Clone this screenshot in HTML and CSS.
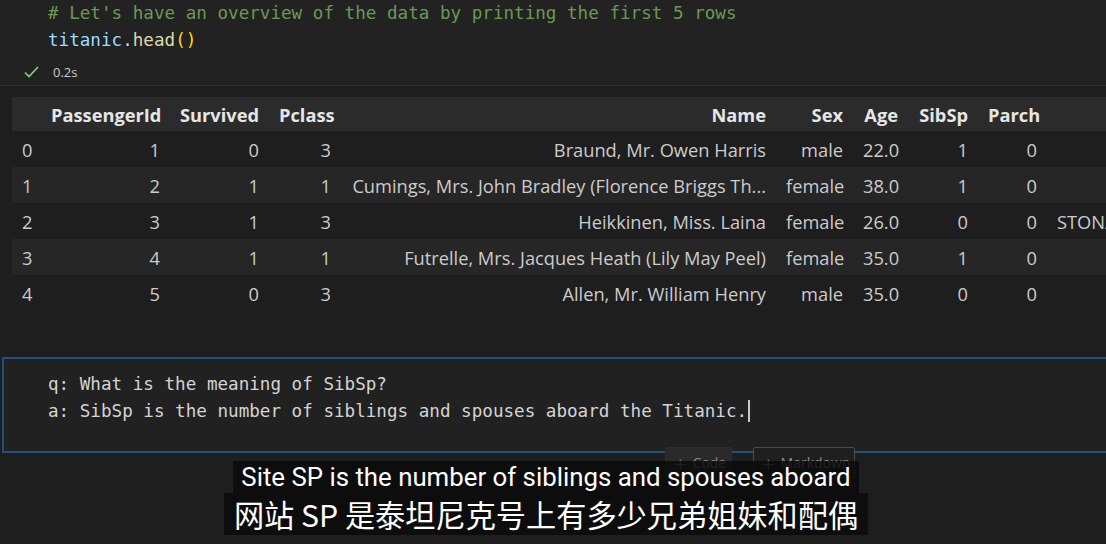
FILE: index.html
```html
<!DOCTYPE html>
<html lang="en">
<head>
<meta charset="utf-8">
<title>titanic.head()</title>
<link rel="stylesheet" href="styles.css">
</head>
<body>
<div class="page">
  <section class="code-cell">
    <div class="code-line"><span class="tok-comment"># Let's have an overview of the data by printing the first 5 rows</span></div>
    <div class="code-line"><span class="tok-var">titanic</span><span class="tok-punc">.</span><span class="tok-fn">head</span><span class="tok-bracket">()</span></div>
    <div class="status">
      <svg class="check" width="15" height="12" viewBox="0 0 15 12"><polyline points="1,6.5 5,10.5 14,1" fill="none" stroke="#89d185" stroke-width="1.6"/></svg>
      <span class="time">0.2s</span>
    </div>
  </section>

  <section class="output">
    <table class="df">
      <colgroup>
        <col class="c-idx"><col class="c-pid"><col class="c-surv"><col class="c-pcl"><col class="c-name"><col class="c-sex"><col class="c-age"><col class="c-sib"><col class="c-par"><col class="c-tic"><col class="c-fare"><col class="c-cab"><col class="c-emb">
      </colgroup>
      <thead>
        <tr><th></th><th>PassengerId</th><th>Survived</th><th>Pclass</th><th>Name</th><th>Sex</th><th>Age</th><th>SibSp</th><th>Parch</th><th>Ticket</th><th>Fare</th><th>Cabin</th><th>Embarked</th></tr>
      </thead>
      <tbody>
        <tr><td class="idx">0</td><td>1</td><td>0</td><td>3</td><td>Braund, Mr. Owen Harris</td><td>male</td><td>22.0</td><td>1</td><td>0</td><td>A/5 21171</td><td>7.2500</td><td>NaN</td><td>S</td></tr>
        <tr><td class="idx">1</td><td>2</td><td>1</td><td>1</td><td>Cumings, Mrs. John Bradley (Florence Briggs Th...</td><td>female</td><td>38.0</td><td>1</td><td>0</td><td>PC 17599</td><td>71.2833</td><td>C85</td><td>C</td></tr>
        <tr><td class="idx">2</td><td>3</td><td>1</td><td>3</td><td>Heikkinen, Miss. Laina</td><td>female</td><td>26.0</td><td>0</td><td>0</td><td>STON/O2. 3101282</td><td>7.9250</td><td>NaN</td><td>S</td></tr>
        <tr><td class="idx">3</td><td>4</td><td>1</td><td>1</td><td>Futrelle, Mrs. Jacques Heath (Lily May Peel)</td><td>female</td><td>35.0</td><td>1</td><td>0</td><td>113803</td><td>53.1000</td><td>C123</td><td>S</td></tr>
        <tr><td class="idx">4</td><td>5</td><td>0</td><td>3</td><td>Allen, Mr. William Henry</td><td>male</td><td>35.0</td><td>0</td><td>0</td><td>373450</td><td>8.0500</td><td>NaN</td><td>S</td></tr>
      </tbody>
    </table>
  </section>

  <section class="md-cell">
    <div class="md-line">q: What is the meaning of SibSp?</div>
    <div class="md-line">a: SibSp is the number of siblings and spouses aboard the Titanic.<span class="cursor"></span></div>
  </section>

  <div class="add-bar">
    <button class="add-btn add-code"><span class="plus">+</span> Code</button>
    <button class="add-btn add-md"><span class="plus">+</span> Markdown</button>
  </div>

  <div class="subs">
    <div class="sub sub-en">Site SP is the number of siblings and spouses aboard</div>
    <div class="sub sub-zh">网站 SP 是泰坦尼克号上有多少兄弟姐妹和配偶</div>
  </div>
</div>
</body>
</html>
```

FILE: styles.css
```css
html, body {
  margin: 0;
  padding: 0;
  background: #1e1e1e;
}
body {
  width: 1106px;
  height: 544px;
  overflow: hidden;
}
.page {
  position: relative;
  width: 1106px;
  height: 544px;
  overflow: hidden;
  background: #1e1e1e;
}

/* code cell */
.code-cell {
  height: 85px;
  background: #222222;
  border-bottom: 1px solid #2f2f2f;
}
.code-line {
  padding-left: 48px;
  height: 27px;
  line-height: 27px;
  font-family: "DejaVu Sans Mono", "Liberation Mono", monospace;
  font-size: 17.6px;
  white-space: pre;
  color: #d4d4d4;
}
.tok-comment { color: #6a9955; }
.tok-var { color: #9cdcfe; }
.tok-punc { color: #d4d4d4; }
.tok-fn { color: #dcdcaa; }
.tok-bracket { color: #ffd700; }

.status {
  display: flex;
  align-items: center;
  height: 24px;
  margin-top: 6px;
  padding-left: 24px;
}
.check { display: block; }
.time {
  margin-left: 14px;
  font-family: "Open Sans", "Noto Sans", sans-serif;
  font-size: 13px;
  color: #cccccc;
}

/* dataframe output */
.output {
  margin-top: 11px;
  padding-left: 12px;
  height: 214px;
  overflow: hidden;
}
.df {
  border-collapse: collapse;
  table-layout: fixed;
  width: 1491px;
  font-family: "Open Sans", "Noto Sans", sans-serif;
  font-size: 18.25px;
  color: #cccccc;
}
.c-idx { width: 29px; }
.c-pid { width: 129px; }
.c-surv { width: 99px; }
.c-pcl { width: 72px; }
.c-name { width: 435px; }
.c-sex { width: 77px; }
.c-age { width: 55px; }
.c-sib { width: 70px; }
.c-par { width: 69px; }
.c-tic { width: 181px; }
.c-fare { width: 95px; }
.c-cab { width: 80px; }
.c-emb { width: 100px; }
.df th, .df td {
  padding: 0 10px;
  text-align: right;
  white-space: nowrap;
  overflow: hidden;
}
.df thead tr {
  height: 34px;
  background: #2b2b2b;
}
.df th {
  font-weight: 700;
  color: #e6e6e6;
}
.df tbody tr {
  height: 36px;
  background: #1e1e1e;
}
.df tbody tr:nth-child(even) {
  background: #262626;
}
.df td.idx {
  text-align: left;
}

/* markdown cell */
.md-cell {
  margin-top: 46px;
  margin-left: 2px;
  padding-top: 12px;
  box-sizing: border-box;
  height: 96px;
  background: #212121;
  border-top: 2px solid #22507a;
  border-bottom: 2px solid #22507a;
  border-left: 2px solid #22507a;
}
.md-line {
  padding-left: 44px;
  height: 27px;
  line-height: 27px;
  font-family: "DejaVu Sans Mono", "Liberation Mono", monospace;
  font-size: 17.6px;
  white-space: pre;
  color: #d4d4d4;
}
.cursor {
  display: inline-block;
  width: 2px;
  height: 22px;
  margin-left: 1px;
  vertical-align: -5px;
  background: #c8c8c8;
}

/* add cell buttons (overlay on divider) */
.add-bar {
  position: absolute;
  top: 447px;
  left: 665px;
  display: flex;
  gap: 21px;
}
.add-btn {
  height: 31px;
  padding: 0 8px;
  display: flex;
  align-items: center;
  gap: 6px;
  font-family: "Open Sans", "Noto Sans", sans-serif;
  font-size: 14px;
  color: #8c8c8c;
  border-radius: 2px;
}
.add-code {
  width: 67px;
  background: #2a2a2a;
  border: 1px solid #2e2e2e;
}
.add-md {
  width: 102px;
  background: #1f1f1f;
  border: 1px solid #4a4a4a;
}
.plus {
  font-size: 22px;
  font-weight: 300;
  line-height: 1;
}

/* subtitles overlay */
.subs {
  position: absolute;
  left: 0;
  right: 14px;
  top: 461px;
  display: flex;
  flex-direction: column;
  align-items: center;
}
.sub {
  background: rgba(10, 10, 10, 0.82);
  color: #ffffff;
  white-space: nowrap;
}
.sub-en {
  font-family: Roboto, "Liberation Sans", sans-serif;
  font-size: 25.8px;
  line-height: 32px;
  padding: 0 8px;
}
.sub-zh {
  font-family: "Noto Sans CJK SC", "Noto Sans", sans-serif;
  font-size: 30.2px;
  line-height: 42px;
  padding: 0 10px;
}
```
